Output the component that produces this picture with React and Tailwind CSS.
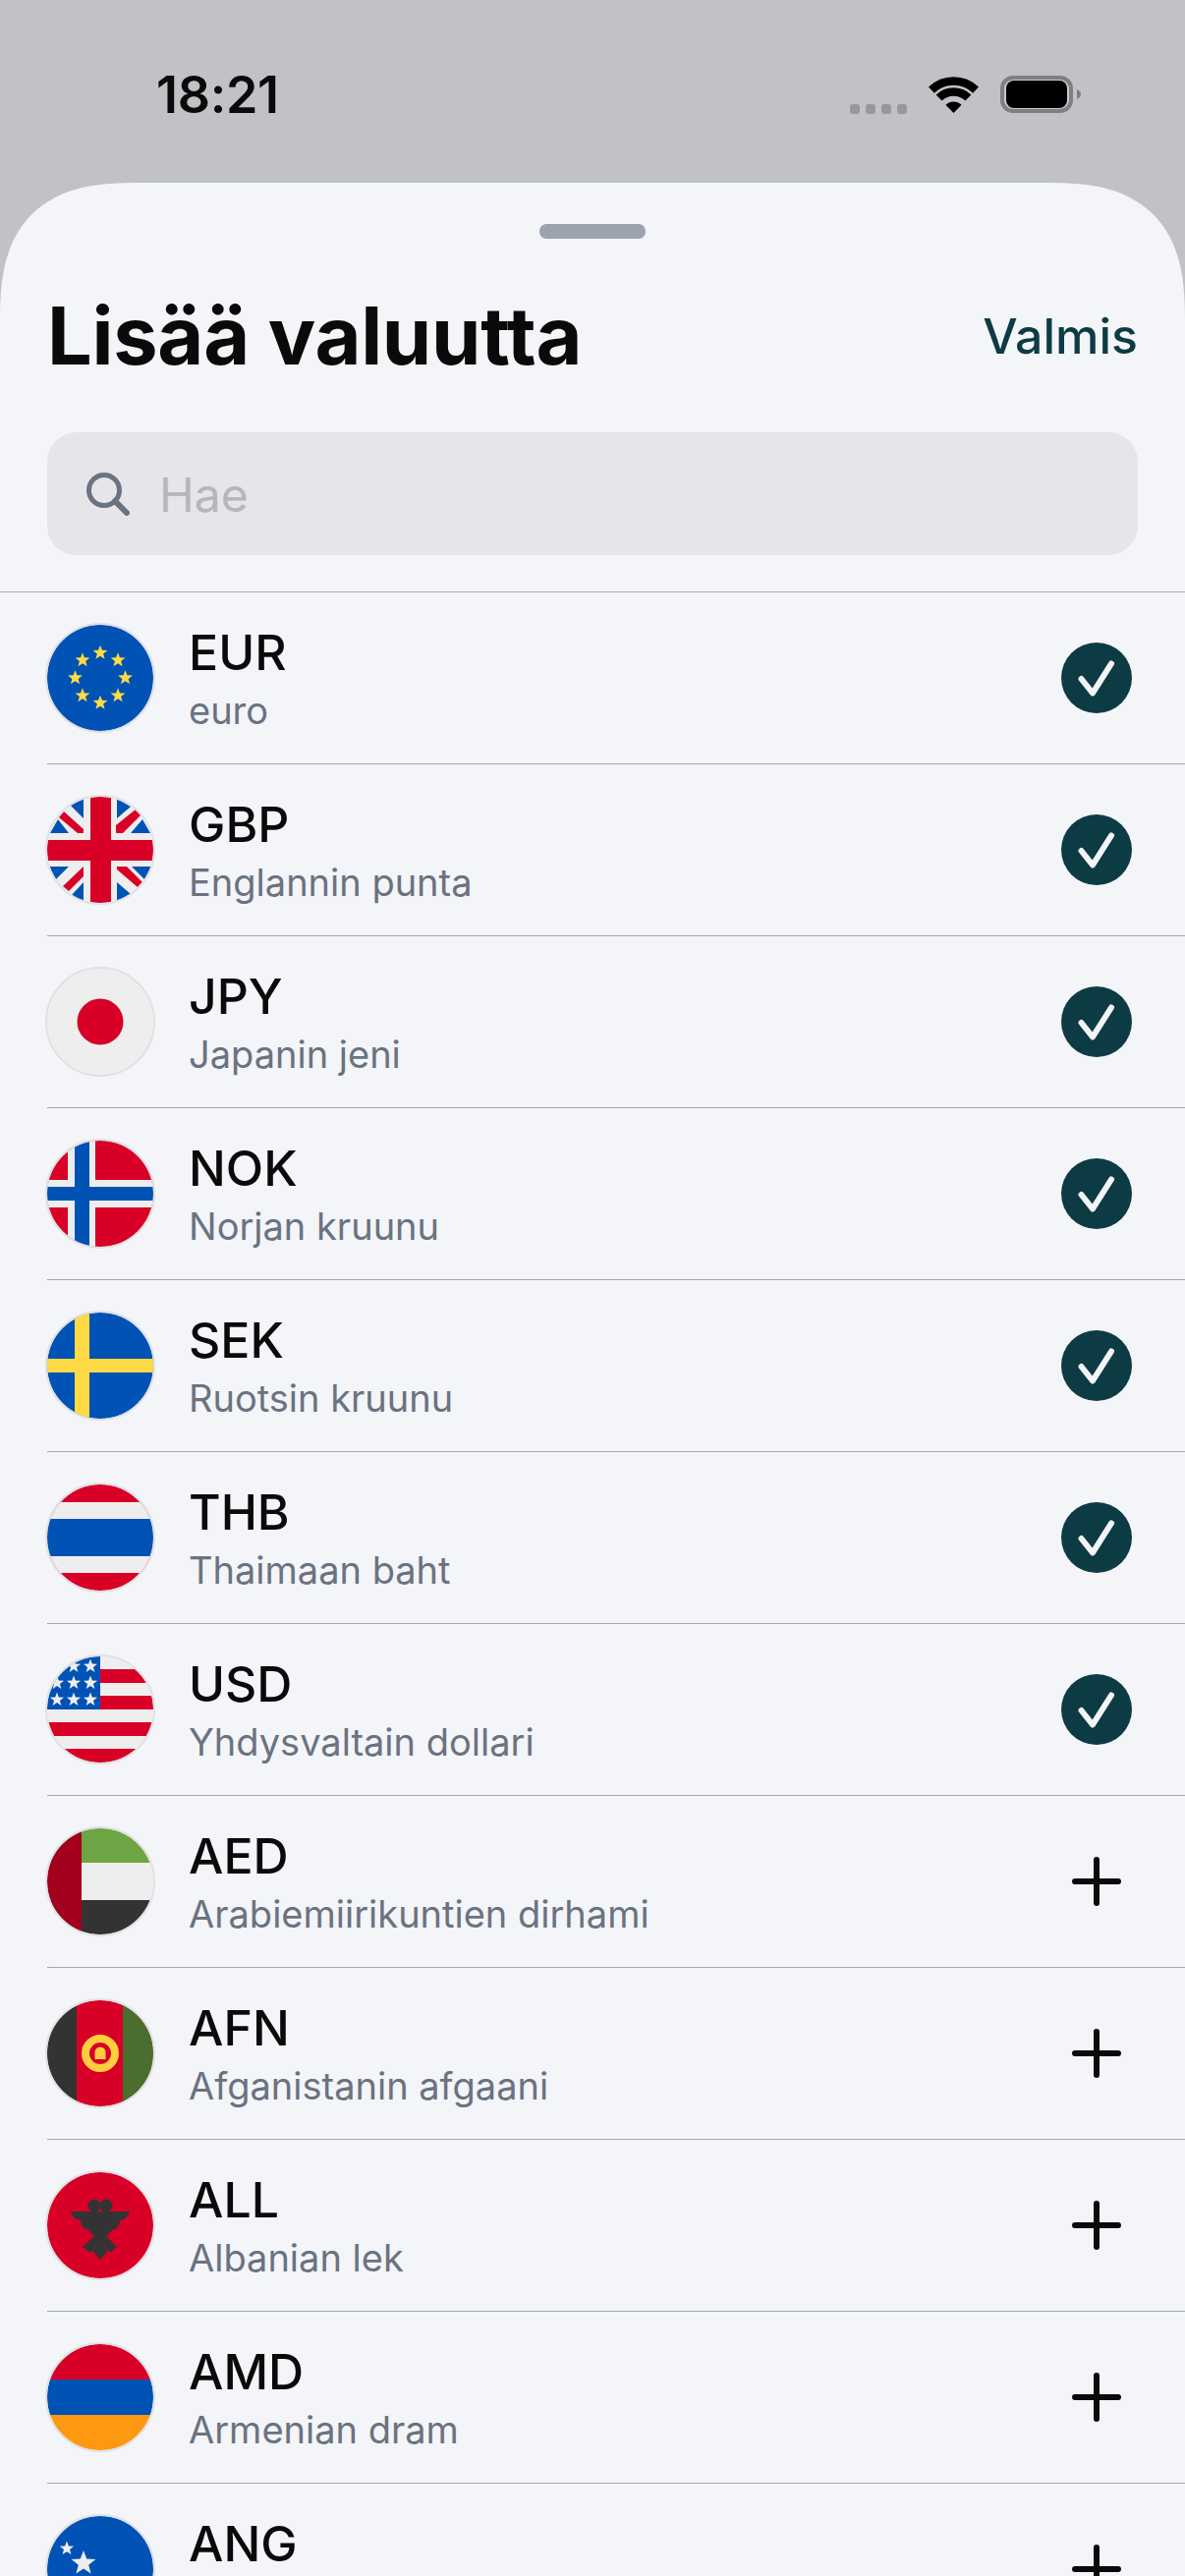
const RED = "#d80027";
const BLUE = "#0052b4";
const WHITE = "#eeeeee";
const YELLOW = "#ffda44";

// five point star centred on cx,cy
function starPoints(cx, cy, r) {
  const pts = [];
  for (let i = 0; i < 10; i++) {
    const rad = i % 2 === 0 ? r : r * 0.42;
    const a = (Math.PI / 5) * i - Math.PI / 2;
    pts.push(`${(cx + rad * Math.cos(a)).toFixed(2)},${(cy + rad * Math.sin(a)).toFixed(2)}`);
  }
  return pts.join(" ");
}

function Star({ x, y, r, fill }) {
  return <polygon points={starPoints(x, y, r)} fill={fill} />;
}

const flags = {
  EUR: (
    <>
      <rect width="108" height="108" fill={BLUE} />
      {[0, 1, 2, 3, 4, 5, 6, 7].map((i) => {
        const a = (Math.PI / 4) * i;
        return <Star key={i} x={54 + 25.5 * Math.sin(a)} y={54 - 25.5 * Math.cos(a)} r={7.8} fill={YELLOW} />;
      })}
    </>
  ),
  GBP: (
    <>
      <rect width="108" height="108" fill={WHITE} />
      <g fill={BLUE}>
        <polygon points="37,2 37,22 22,7" />
        <polygon points="3,37 22,37 11,23" />
        <polygon points="71,2 85,10 71,22" />
        <polygon points="85,37 105,37 97,23" />
        <polygon points="2,71 22,71 9,84" />
        <polygon points="37,87 37,106 24,101" />
        <polygon points="86,71 106,71 99,84" />
        <polygon points="71,87 85,99 71,106" />
      </g>
      <g fill={RED}>
        <rect x="44" width="21" height="108" />
        <rect y="44" width="108" height="21" />
        <polygon points="17,15 37,33 37,37 31,37 12,21" />
        <polygon points="91,12 96,18 77,37 70,37 70,29" />
        <polygon points="71,71 81,71 97,87 92,92 71,74" />
        <polygon points="37,71 37,81 22,96 16,91" />
      </g>
    </>
  ),
  JPY: (
    <>
      <rect width="108" height="108" fill={WHITE} />
      <circle cx="54" cy="54" r="23.5" fill={RED} />
    </>
  ),
  NOK: (
    <>
      <rect width="108" height="108" fill={RED} />
      <rect x="21" width="28" height="108" fill={WHITE} />
      <rect y="40" width="108" height="28" fill={WHITE} />
      <rect x="28" width="15" height="108" fill={BLUE} />
      <rect y="47" width="108" height="14" fill={BLUE} />
    </>
  ),
  SEK: (
    <>
      <rect width="108" height="108" fill={BLUE} />
      <rect x="28" width="15" height="108" fill={YELLOW} />
      <rect y="47" width="108" height="14" fill={YELLOW} />
    </>
  ),
  THB: (
    <>
      <rect width="108" height="108" fill={RED} />
      <rect y="18" width="108" height="72" fill={WHITE} />
      <rect y="35" width="108" height="38" fill={BLUE} />
    </>
  ),
  USD: (
    <>
      <rect width="108" height="108" fill={WHITE} />
      <g fill={RED}>
        <rect x="54" y="13" width="54" height="14" />
        <rect x="54" y="40" width="54" height="14" />
        <rect y="67" width="108" height="14" />
        <rect y="94" width="108" height="14" />
      </g>
      <rect width="54" height="54" fill={BLUE} />
      {[[27, 10], [44, 10], [10, 27], [27, 27], [44, 27], [10, 44], [27, 44], [44, 44]].map(([x, y]) => (
        <Star key={`${x}-${y}`} x={x} y={y} r={7.4} fill={WHITE} />
      ))}
    </>
  ),
  AED: (
    <>
      <rect width="108" height="108" fill={WHITE} />
      <rect width="108" height="35" fill="#6da544" />
      <rect y="73" width="108" height="35" fill="#333333" />
      <rect width="35" height="108" fill="#a2001d" />
    </>
  ),
  AFN: (
    <>
      <rect width="108" height="108" fill={RED} />
      <rect width="30" height="108" fill="#333333" />
      <rect x="77" width="31" height="108" fill="#496e2d" />
      <circle cx="54" cy="54" r="15" fill="none" stroke="#ffce3e" strokeWidth="8" />
      <path d="M48.5 60v-7a5.5 5.5 0 0 1 11 0v7z" fill="#ffce3e" />
    </>
  ),
  ALL: (
    <>
      <rect width="108" height="108" fill={RED} />
      <g fill="#333333">
        <circle cx="48" cy="34" r="6.5" />
        <circle cx="60" cy="34" r="6.5" />
        <path d="M24 40H84C83 45 79 48 74 49C74 54 71 58 66 59C64 62 62 64 60 65L71 76L64 82L57 72L62 80L54 89L46 80L51 72L44 82L36 76L48 65C46 64 44 62 42 59C37 58 34 54 34 49C29 48 25 45 24 40Z" />
      </g>
    </>
  ),
  AMD: (
    <>
      <rect width="108" height="36" fill={RED} />
      <rect y="36" width="108" height="36" fill={BLUE} />
      <rect y="72" width="108" height="36" fill="#ff9811" />
    </>
  ),
  ANG: (
    <>
      <rect width="108" height="108" fill={BLUE} />
      <Star x={20} y={33} r={7.5} fill={WHITE} />
      <Star x={37} y={48} r={13} fill={WHITE} />
    </>
  ),
};

const currencies = [
  { code: "EUR", name: "euro", added: true },
  { code: "GBP", name: "Englannin punta", added: true },
  { code: "JPY", name: "Japanin jeni", added: true },
  { code: "NOK", name: "Norjan kruunu", added: true },
  { code: "SEK", name: "Ruotsin kruunu", added: true },
  { code: "THB", name: "Thaimaan baht", added: true },
  { code: "USD", name: "Yhdysvaltain dollari", added: true },
  { code: "AED", name: "Arabiemiirikuntien dirhami" },
  { code: "AFN", name: "Afganistanin afgaani" },
  { code: "ALL", name: "Albanian lek" },
  { code: "AMD", name: "Armenian dram" },
  { code: "ANG", name: "" },
];

function StatusBar() {
  return (
    <div className="h-[186px] flex items-start justify-between pt-[67px] pl-[159px] pr-[106px]">
      <span className="text-[52px] leading-[60px] font-semibold text-[#0a0a0a] tracking-[-0.3px]">18:21</span>
      <div className="flex items-start pt-[11px]">
        <div className="flex gap-[6px] mt-[28px]">
          <span className="w-[10px] h-[10px] rounded-[3px] bg-[#98989c]" />
          <span className="w-[10px] h-[10px] rounded-[3px] bg-[#98989c]" />
          <span className="w-[10px] h-[10px] rounded-[3px] bg-[#98989c]" />
          <span className="w-[10px] h-[10px] rounded-[3px] bg-[#98989c]" />
        </div>
        <svg className="ml-[22px]" width="51" height="37" viewBox="0 0 51 37">
          <path d="M2.9 13.6A32.5 32.5 0 0 1 48.1 13.6" fill="none" stroke="#000" strokeWidth="8.5" />
          <path d="M10.6 21.5A21.5 21.5 0 0 1 40.4 21.5" fill="none" stroke="#000" strokeWidth="8.5" />
          <path d="M25.5 37L17.4 28.8A11.4 11.4 0 0 1 33.6 28.8Z" fill="#000" />
        </svg>
        <svg className="ml-[22px] -mt-[1px]" width="82" height="38" viewBox="0 0 82 38">
          <rect x="2" y="2" width="70" height="34" rx="11" fill="#c9c9cd" stroke="#7f7f84" strokeWidth="4" />
          <rect x="6" y="5" width="62" height="28" rx="8" fill="#000" />
          <path d="M78 14C80.5 15 82 17 82 19S80.5 23 78 24Z" fill="#7f7f84" />
        </svg>
      </div>
    </div>
  );
}

function CurrencyRow({ code, name, added }) {
  return (
    <div className="ml-[48px] h-[175px] shrink-0 flex items-center border-b border-[#a6a7ac]">
      <div className="w-[108px] h-[108px] rounded-full overflow-hidden shrink-0 outline-2 outline-[#e0e1e4]">
        <svg width="108" height="108" viewBox="0 0 108 108" className="block">
          {flags[code]}
        </svg>
      </div>
      <div className="ml-[36px] flex-1 min-w-0 pt-[2px]">
        <div className="text-[50px] leading-[58px] font-medium text-[#0a0a0a]">{code}</div>
        <div className="h-[48px] text-[38px] leading-[48px] mt-[6px] text-[#6b7280]">{name}</div>
      </div>
      <div className="w-[72px] mr-[54px] flex items-center justify-center shrink-0">
        {added ? (
          <div className="w-[72px] h-[72px] rounded-full bg-[#0d3b44] flex items-center justify-center">
            <svg width="72" height="72" viewBox="0 0 72 72">
              <path d="M20.5 37L32 51.5L51 21.5" fill="none" stroke="#f3f4f8" strokeWidth="6" strokeLinecap="round" strokeLinejoin="round" />
            </svg>
          </div>
        ) : (
          <svg width="50" height="50" viewBox="0 0 50 50">
            <path d="M25 3V47M3 25H47" fill="none" stroke="#0a0a0a" strokeWidth="6" strokeLinecap="round" />
          </svg>
        )}
      </div>
    </div>
  );
}

export default function App() {
  return (
    <div className="h-screen overflow-hidden bg-[#c1c2c6] [font-family:Inter,sans-serif]">
      <StatusBar />
      <div className="h-[2436px] overflow-hidden bg-[#f3f5f9] rounded-t-[140px] [corner-shape:superellipse(1.4)]">
        <div className="flex justify-center pt-[42px]">
          <div className="w-[108px] h-[15px] rounded-[7px] bg-[#9ca3af]" />
        </div>
        <div className="h-[197px] px-[48px] flex items-center justify-between">
          <h1 className="text-[81px] leading-[98px] font-bold text-[#0a0a0a] tracking-[-0.25px]">Lisää valuutta</h1>
          <button className="text-[50px] leading-[58px] font-medium text-[#0d3b44]">Valmis</button>
        </div>
        <div className="mx-[48px] h-[125px] rounded-[30px] bg-[#e5e5ea] flex items-center pl-[40px]">
          <svg width="44" height="44" viewBox="0 0 44 44" fill="none" stroke="#6b7280">
            <circle cx="18" cy="18" r="15.5" strokeWidth="5" />
            <path d="M29 29L41 41" strokeWidth="6" strokeLinecap="round" />
          </svg>
          <span className="ml-[30px] pt-[2px] text-[48px] leading-[58px] text-[#b6b6bb]">Hae</span>
        </div>
        <div className="mt-[37px] border-t border-[#a6a7ac]" />
        <div className="flex flex-col">
          {currencies.map((c) => (
            <CurrencyRow key={c.code} {...c} />
          ))}
        </div>
      </div>
    </div>
  );
}
